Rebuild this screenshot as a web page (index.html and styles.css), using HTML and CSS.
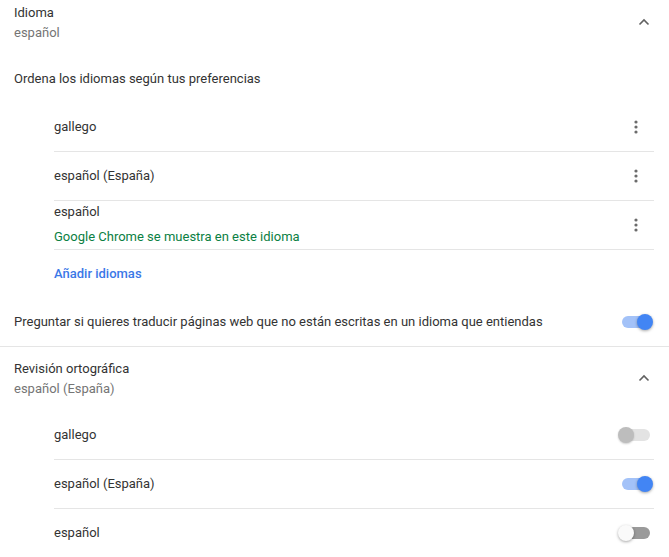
FILE: index.html
```html
<!DOCTYPE html>
<html lang="es">
<head>
<meta charset="utf-8">
<title>Idiomas</title>
<link rel="stylesheet" href="styles.css">
</head>
<body>
<div class="page">
  <div class="head">
    <div class="head-text">
      <div class="line">Idioma</div>
      <div class="line secondary">español</div>
    </div>
    <span class="chevron"><svg width="12" height="8" viewBox="0 0 12 8"><polyline points="1.5,6.5 6,2 10.5,6.5" fill="none" stroke="#616161" stroke-width="1.6"/></svg></span>
  </div>

  <div class="intro line">Ordena los idiomas según tus preferencias</div>

  <div class="list">
    <div class="row">
      <span class="line">gallego</span>
      <span class="kebab"><svg width="4" height="14" viewBox="0 0 4 14"><circle cx="2" cy="2" r="1.6"/><circle cx="2" cy="7" r="1.6"/><circle cx="2" cy="12" r="1.6"/></svg></span>
    </div>
    <div class="row">
      <span class="line">español (España)</span>
      <span class="kebab"><svg width="4" height="14" viewBox="0 0 4 14"><circle cx="2" cy="2" r="1.6"/><circle cx="2" cy="7" r="1.6"/><circle cx="2" cy="12" r="1.6"/></svg></span>
    </div>
    <div class="row row-two">
      <div class="two-lines">
        <span class="line">español</span>
        <span class="line green">Google Chrome se muestra en este idioma</span>
      </div>
      <span class="kebab"><svg width="4" height="14" viewBox="0 0 4 14"><circle cx="2" cy="2" r="1.6"/><circle cx="2" cy="7" r="1.6"/><circle cx="2" cy="12" r="1.6"/></svg></span>
    </div>
  </div>

  <div class="add line">Añadir idiomas</div>

  <div class="setting">
    <span class="line">Preguntar si quieres traducir páginas web que no están escritas en un idioma que entiendas</span>
    <span class="toggle on"><span class="track"></span><span class="knob"></span></span>
  </div>

  <div class="head">
    <div class="head-text">
      <div class="line">Revisión ortográfica</div>
      <div class="line secondary">español (España)</div>
    </div>
    <span class="chevron"><svg width="12" height="8" viewBox="0 0 12 8"><polyline points="1.5,6.5 6,2 10.5,6.5" fill="none" stroke="#616161" stroke-width="1.6"/></svg></span>
  </div>

  <div class="list">
    <div class="row">
      <span class="line">gallego</span>
      <span class="toggle disabled"><span class="track"></span><span class="knob"></span></span>
    </div>
    <div class="row">
      <span class="line">español (España)</span>
      <span class="toggle on"><span class="track"></span><span class="knob"></span></span>
    </div>
    <div class="row last">
      <span class="line">español</span>
      <span class="toggle off"><span class="track"></span><span class="knob"></span></span>
    </div>
  </div>
</div>
</body>
</html>
```

FILE: styles.css
```css
html, body {
  margin: 0;
  padding: 0;
  background: #ffffff;
  overflow: hidden;
}
body {
  font-family: Roboto, "Liberation Sans", Arial, sans-serif;
  font-size: 13px;
  color: #333333;
}
.page {
  margin-top: -9px;
}
.line {
  line-height: 20px;
  white-space: nowrap;
}
.secondary {
  color: #757575;
}
.green {
  color: #0b8043;
}
.head {
  height: 64px;
  box-sizing: border-box;
  padding: 12px 13px 12px 14px;
  display: flex;
  align-items: center;
  justify-content: space-between;
}
.head-text {
  display: flex;
  flex-direction: column;
}
.chevron {
  width: 24px;
  height: 24px;
  display: flex;
  align-items: center;
  justify-content: center;
  margin-top: -2px;
}
.intro {
  padding: 14px 14px 14px 14px;
}
.list {
  margin: 0 15px 0 54px;
}
.row {
  height: 48px;
  display: flex;
  align-items: center;
  justify-content: space-between;
  border-bottom: 1px solid #e5e5e5;
}
.row.last {
  border-bottom: none;
}
.row-two {
  align-items: stretch;
}
.two-lines {
  display: flex;
  flex-direction: column;
  gap: 5px;
  padding-top: 1px;
}
.row-two .kebab {
  align-self: center;
}
.kebab {
  width: 36px;
  height: 20px;
  display: flex;
  align-items: center;
  justify-content: center;
  fill: #6b6b6b;
}
.add {
  padding: 14px 0 14px 54px;
  color: #3b78e7;
  font-weight: 500;
}
.setting {
  height: 48px;
  padding: 0 15px 0 14px;
  display: flex;
  align-items: center;
  justify-content: space-between;
  border-bottom: 1px solid #e5e5e5;
}
.setting .line {
  margin-top: -1px;
}
.toggle {
  position: relative;
  width: 36px;
  height: 16px;
  flex: none;
}
.toggle .track {
  position: absolute;
  left: 4px;
  top: 2px;
  width: 28px;
  height: 12px;
  border-radius: 6px;
}
.toggle .knob {
  position: absolute;
  top: 0;
  left: 0;
  width: 16px;
  height: 16px;
  border-radius: 50%;
  box-shadow: 0 1px 3px rgba(0, 0, 0, 0.35);
}
.toggle.on .track {
  background: #a3c2f8;
}
.toggle.on .knob {
  left: 19px;
  background: #4285f4;
}
.toggle.disabled .track {
  background: #e3e3e3;
}
.toggle.disabled .knob {
  background: #bdbdbd;
  box-shadow: 0 1px 2px rgba(0, 0, 0, 0.2);
}
.toggle.off .track {
  background: #9a9a9a;
}
.toggle.off .knob {
  background: #fafafa;
}
```
